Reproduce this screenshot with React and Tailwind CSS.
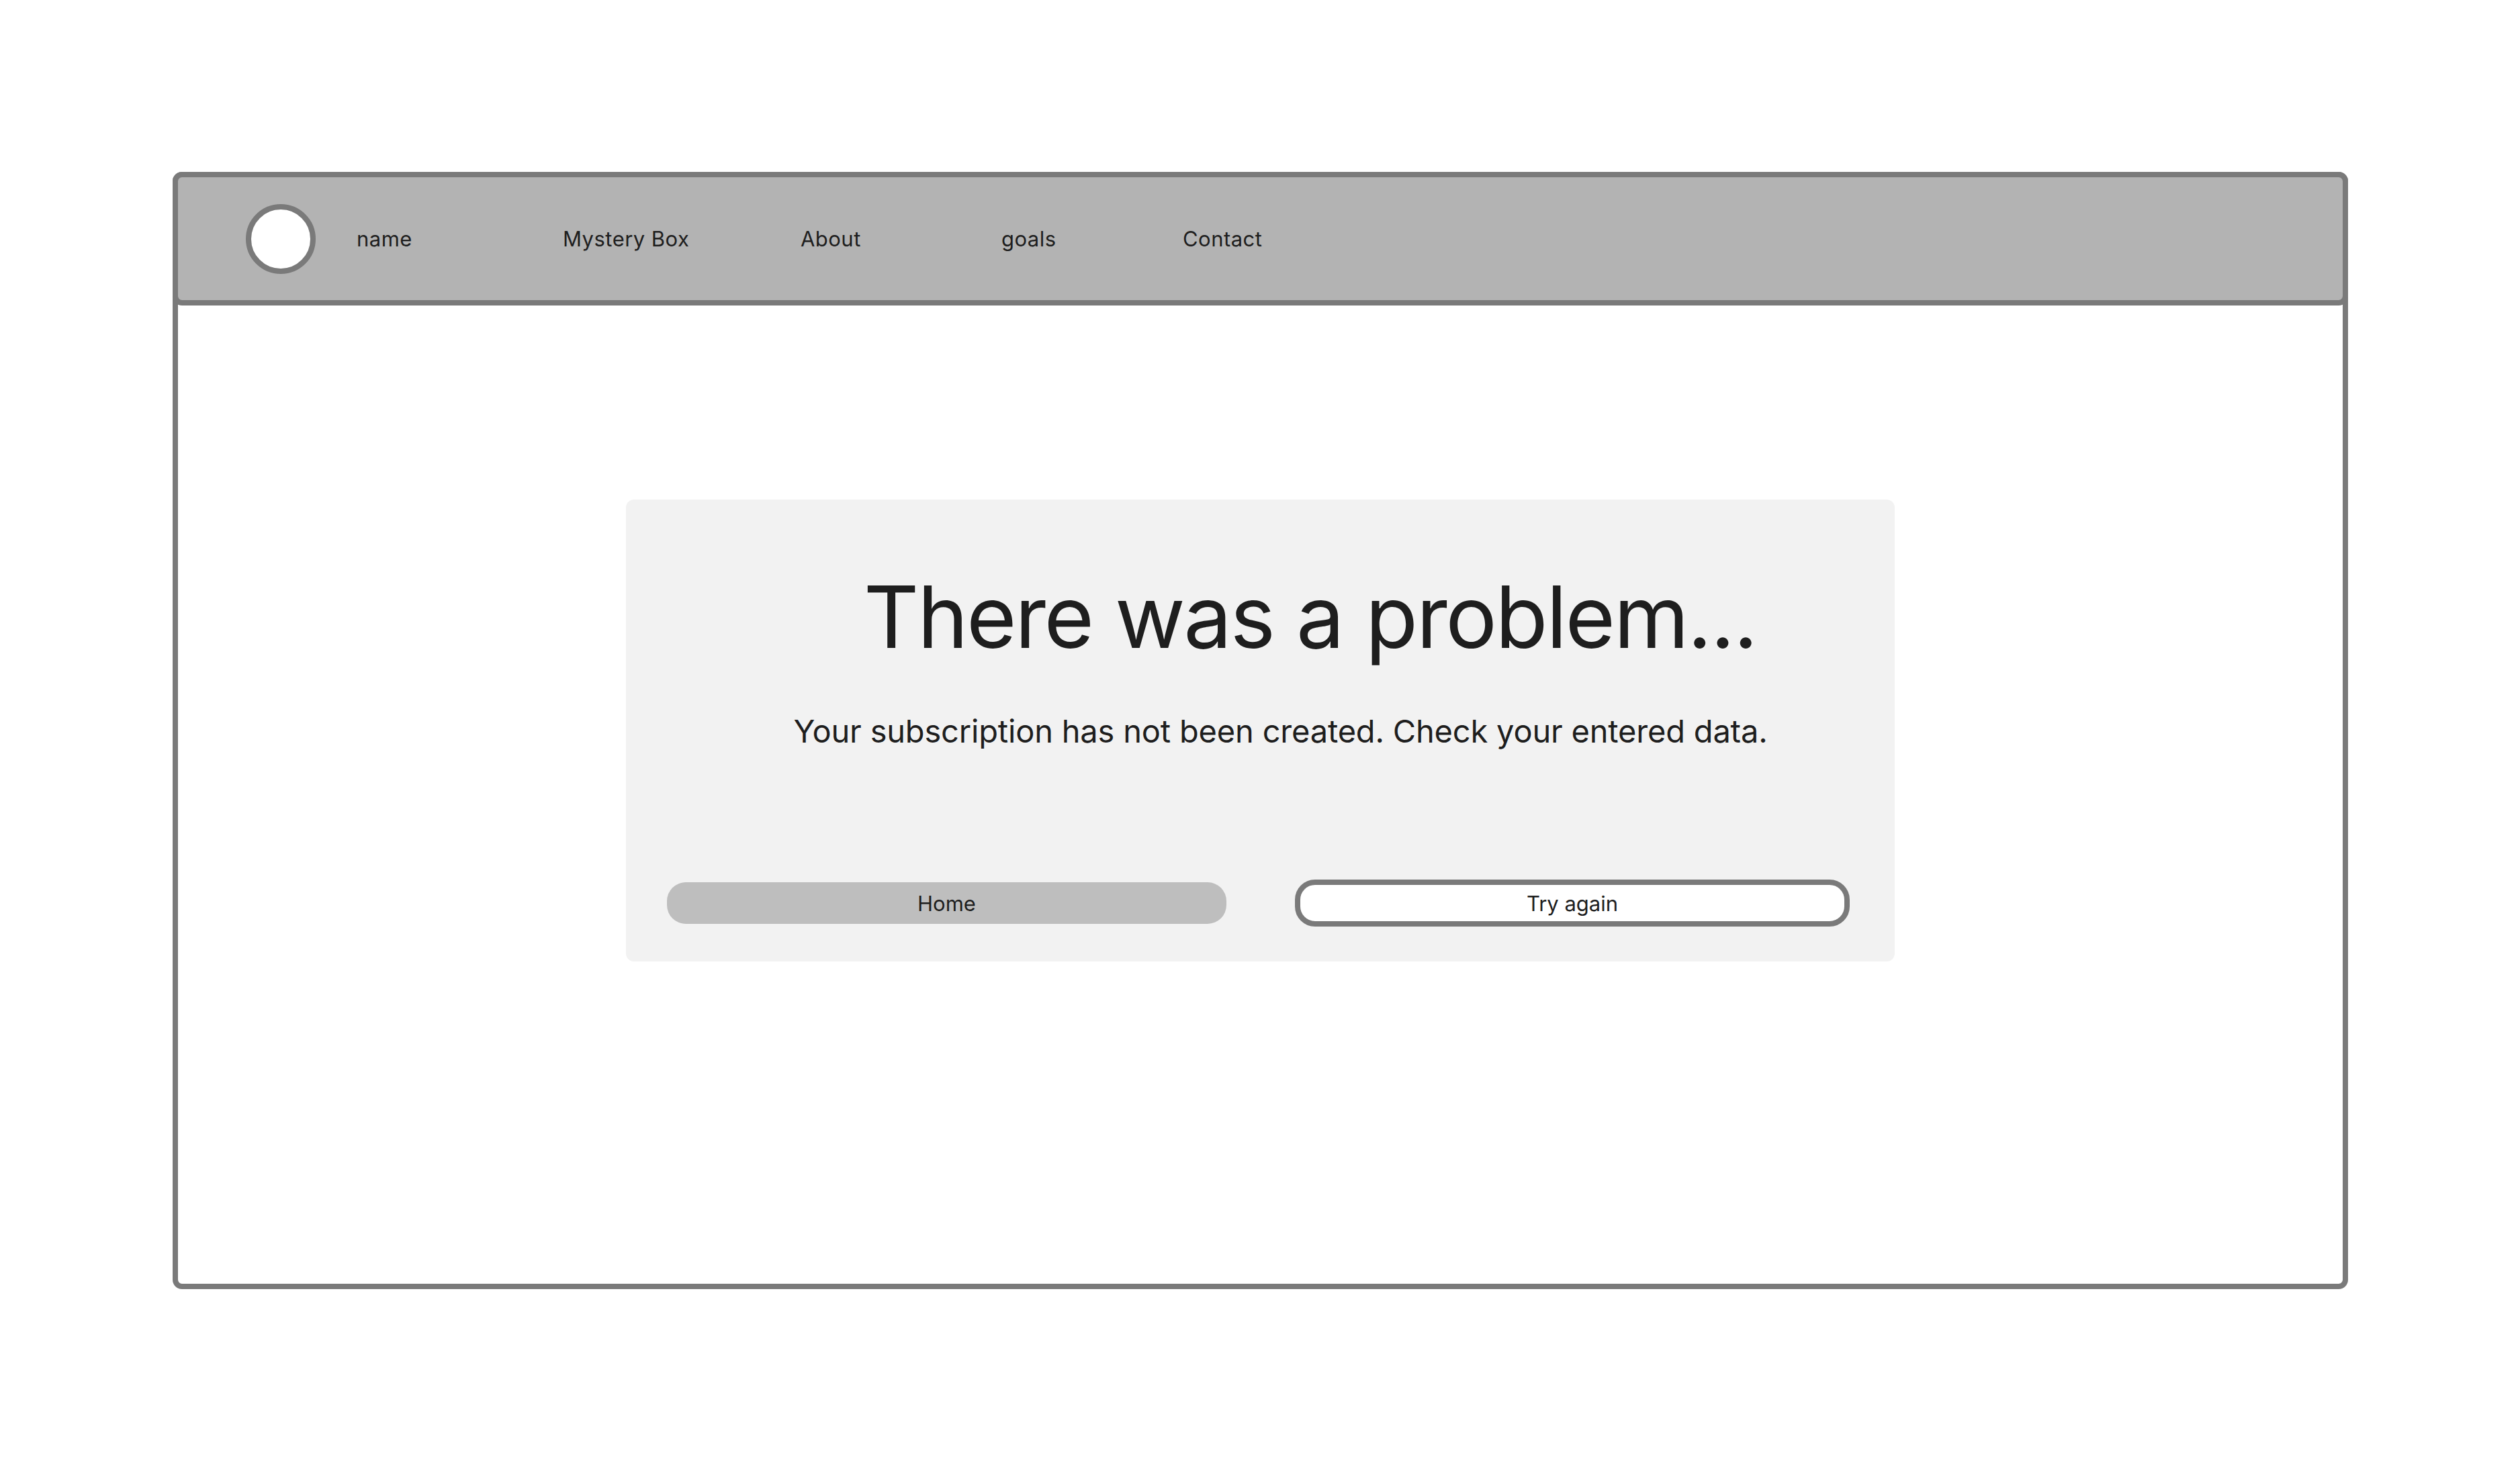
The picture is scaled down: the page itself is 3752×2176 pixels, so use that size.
import React from 'react';

const NAV_ITEMS = [
  { label: 'name', width: 'w-[307px]' },
  { label: 'Mystery Box', width: 'w-[354px]' },
  { label: 'About', width: 'w-[299px]' },
  { label: 'goals', width: 'w-[270px]' },
  { label: 'Contact', width: 'w-auto' },
];

export default function App() {
  return (
    <div className="w-[3752px] h-[2176px] bg-white p-[256px] pl-[257px] font-['Inter',_'Noto_Sans',_sans-serif] text-[#1e1e1e]">
      <div className="h-full border-[8px] border-[#7a7a7a] rounded-[14px] bg-white">
        {/* top bar */}
        <header className="-mx-[8px] -mt-[8px] h-[199px] border-[8px] border-[#7a7a7a] rounded-[14px] bg-[#b3b3b3] flex items-center pl-[101px]">
          <div className="w-[104px] h-[104px] rounded-full border-[8px] border-[#7a7a7a] bg-white shrink-0" />
          <nav className="flex items-center ml-[61px] text-[31px] leading-none tracking-[0.015em]">
            {NAV_ITEMS.map((item) => (
              <span key={item.label} className={`${item.width} shrink-0`}>{item.label}</span>
            ))}
          </nav>
        </header>

        <main className="flex justify-center pt-[289px]">
          <section className="w-[1889px] h-[688px] bg-[#f2f2f2] rounded-[12px] flex flex-col pt-[111px]">
            <h1 className="text-[128px] leading-none font-normal text-center pl-[148px] tracking-[-0.02em]">There was a problem...</h1>
            <p className="mt-[82px] text-[47px] leading-none text-center pl-[60px] tracking-[-0.004em]">
              Your subscription has not been created. Check your entered data.
            </p>
            <div className="mt-[198px] flex items-center pl-[61px] gap-[102px] h-[70px]">
              <button className="w-[833px] h-[62px] rounded-[28px] bg-[#bebebe] text-[31px] leading-none">Home</button>
              <button className="w-[826px] h-[70px] rounded-[30px] border-[8px] border-[#7a7a7a] bg-white text-[31px] leading-none">Try again</button>
            </div>
          </section>
        </main>
      </div>
    </div>
  );
}
